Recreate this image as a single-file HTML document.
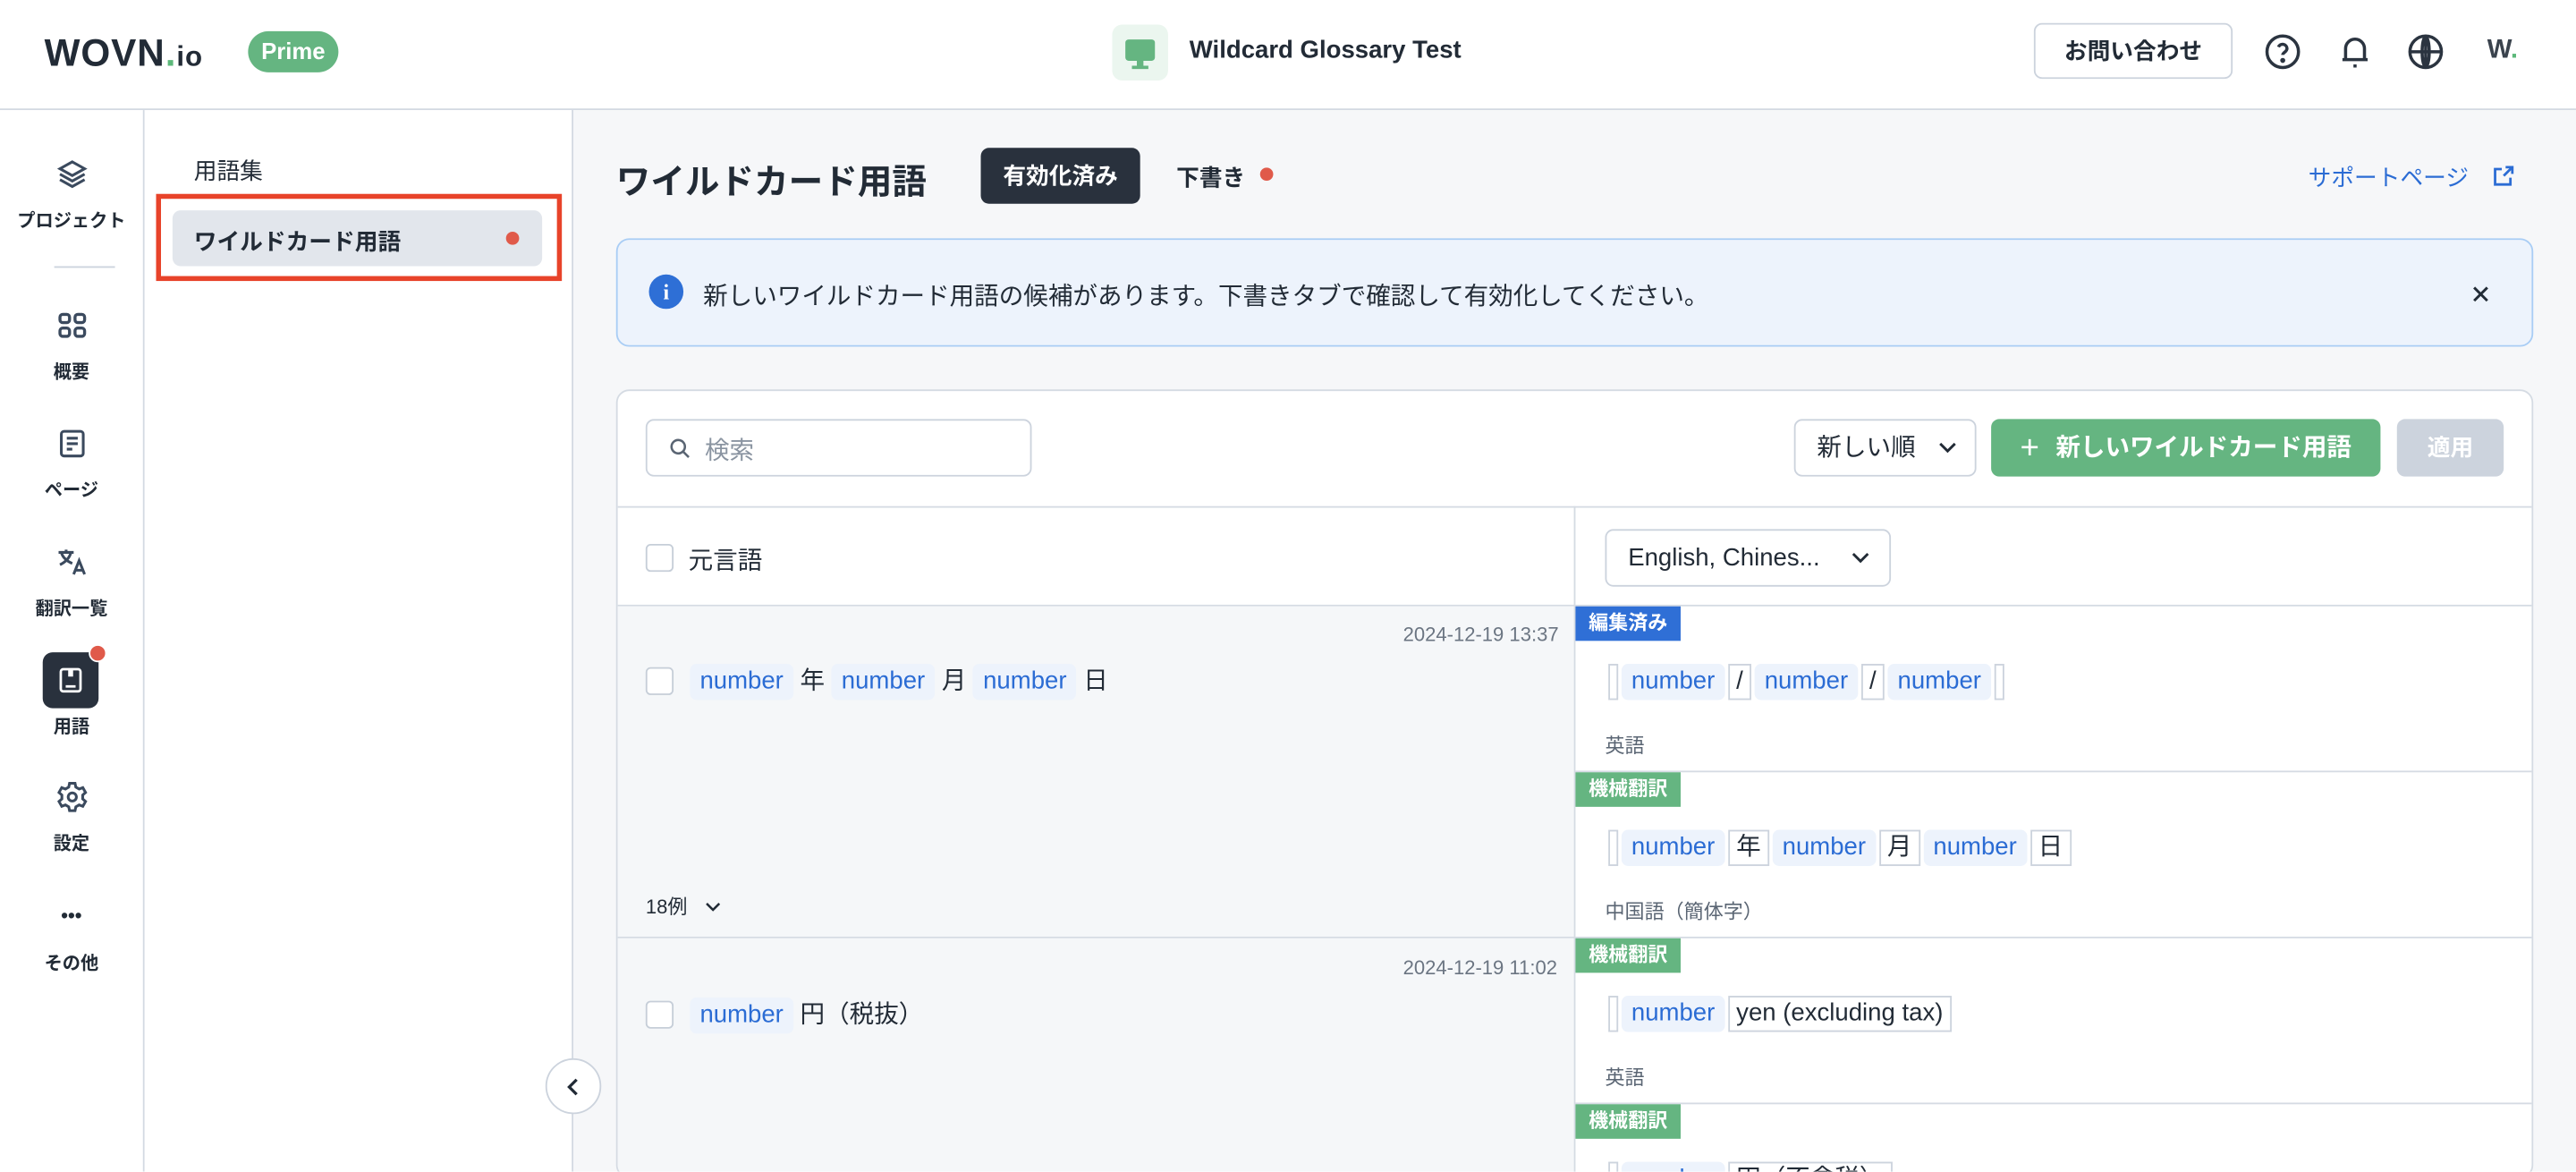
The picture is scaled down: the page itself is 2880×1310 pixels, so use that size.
<!DOCTYPE html>
<html><head><meta charset="utf-8">
<style>
*{box-sizing:border-box;margin:0;padding:0}
html,body{width:2880px;height:1309px;overflow:hidden;background:#fff}
body{font-family:"Liberation Sans","Noto Sans CJK JP",sans-serif;color:#222b36}
#w{position:absolute;left:0;top:0;width:1568px;height:713px;transform:scale(1.83673);transform-origin:0 0;overflow:hidden}
.a{position:absolute}
.hdr{left:0;top:0;width:1568px;height:67px;border-bottom:1px solid #d3d9e2;background:#fff}
.rail{left:0;top:67px;width:88px;height:646px;border-right:1px solid #d3d9e2;background:#fff}
.side{left:88px;top:67px;width:261px;height:646px;border-right:1px solid #d3d9e2;background:#fff}
.main{left:349px;top:67px;width:1219px;height:646px;background:#f6f7f9;overflow:visible}
.ri{position:absolute;left:0;width:87px;text-align:center;font-size:11px;font-weight:700;color:#222b36}
.ri svg{display:block;margin:0 auto 10px}
.tok{display:inline-block;background:#edf3fc;color:#2b6cd4;border-radius:4px;padding:0 6px;height:22px;line-height:22px;font-size:15px;vertical-align:middle}
.lit{display:inline-block;border:1px solid #ccd3dd;height:22px;line-height:20px;padding:0 4px;font-size:15px;vertical-align:middle;color:#222b36;margin:0 2px}
.emp{display:inline-block;border:1px solid #ccd3dd;width:6px;height:22px;vertical-align:middle}
.badge{position:absolute;left:0;height:21px;line-height:21px;padding:0 8px;color:#fff;font-size:12px;font-weight:700}
.cb{position:absolute;width:17px;height:17px;border:1px solid #c6ced8;border-radius:3px;background:#fff}
.lang{position:absolute;left:18px;font-size:12px;color:#5a6573}
.date{position:absolute;font-size:12px;color:#6b7582}
.chev{position:absolute}
</style></head><body><div id="w">
<div class="a hdr">
  <div class="a" style="left:27px;top:19px;font-size:23px;font-weight:900;letter-spacing:0.5px;color:#222b36">WOVN<span style="color:#5cb87a">.</span><span style="font-size:17px">io</span></div>
  <div class="a" style="left:151px;top:19px;width:55px;height:25px;border-radius:13px;background:#65b581;color:#fff;font-size:14px;font-weight:700;text-align:center;line-height:25px">Prime</div>
  <div class="a" style="left:677px;top:15px;width:34px;height:34px;border-radius:6px;background:#ebf6ef"><div class="a" style="left:8px;top:9px;width:18px;height:13px;background:#65b581;border-radius:2px"></div><div class="a" style="left:15px;top:22px;width:4px;height:4px;background:#65b581"></div><div class="a" style="left:12px;top:25px;width:10px;height:2px;background:#65b581"></div></div>
  <div class="a" style="left:724px;top:22px;font-size:15px;font-weight:600">Wildcard Glossary Test</div>
  <div class="a" style="left:1238px;top:14px;width:121px;height:34px;border:1px solid #ccd3dd;border-radius:5px;text-align:center;line-height:32px;font-size:14px;font-weight:700">お問い合わせ</div>
  <svg class="a" style="left:1378px;top:20px" width="23" height="23" viewBox="0 0 24 24" fill="none" stroke="#2b3440" stroke-width="2"><circle cx="12" cy="12" r="10"/><path d="M9.3 9a2.8 2.8 0 0 1 5.4 1c0 2-2.7 2.5-2.7 4"/><circle cx="12" cy="17.5" r=".6" fill="#2b3440"/></svg>
  <svg class="a" style="left:1422px;top:20px" width="23" height="23" viewBox="0 0 24 24" fill="none" stroke="#2b3440" stroke-width="2"><path d="M6 17V10a6 6 0 0 1 12 0v7M4 17h16M11 21h2"/></svg>
  <svg class="a" style="left:1465px;top:20px" width="23" height="23" viewBox="0 0 24 24" fill="none" stroke="#2b3440" stroke-width="2"><circle cx="12" cy="12" r="10"/><path d="M2 12h20M12 2v20M12 2c-3 3-3 17 0 20M12 2c3 3 3 17 0 20"/></svg>
  <div class="a" style="left:1514px;top:22px;font-size:16px;font-weight:900;color:#3a434d">W<span style="color:#5cb87a">.</span></div>
</div>
<div class="a rail">
  <div class="ri" style="top:29px"><svg width="20" height="20" viewBox="0 0 24 24" fill="none" stroke="#3b4a5e" stroke-width="2"><path d="M12 3l9 5-9 5-9-5z M3 12l9 5 9-5 M3 16l9 5 9-5"/></svg>プロジェクト</div>
  <div class="a" style="left:33px;top:95px;width:37px;height:1px;background:#ccd3dd"></div>
  <div class="ri" style="top:121px"><svg width="20" height="20" viewBox="0 0 24 24" fill="none" stroke="#3b4a5e" stroke-width="2.2"><rect x="3" y="4" width="7" height="6" rx="2"/><rect x="14" y="4" width="7" height="6" rx="2"/><rect x="3" y="14" width="7" height="6" rx="2"/><rect x="14" y="14" width="7" height="6" rx="2"/></svg>概要</div>
  <div class="ri" style="top:193px"><svg width="20" height="20" viewBox="0 0 24 24" fill="none" stroke="#3b4a5e" stroke-width="2"><rect x="4" y="3" width="16" height="18" rx="2"/><path d="M8 8h8M8 12h8M8 16h4"/></svg>ページ</div>
  <div class="ri" style="top:265px"><svg width="20" height="20" viewBox="0 0 24 24" fill="none" stroke="#3b4a5e" stroke-width="2"><path d="M2 5h11M7.5 3v2M4 5c1 4 5 7 8 8M11 5c-1 4-4 7-8 9M13 21l4-10 4 10M14.5 18h5"/></svg>翻訳一覧</div>
  <div class="a" style="left:26px;top:330px;width:34px;height:34px;border-radius:6px;background:#29313d"><svg class="a" style="left:8px;top:8px" width="18" height="18" viewBox="0 0 24 24" fill="none" stroke="#fff" stroke-width="2"><rect x="4" y="3" width="16" height="18" rx="2"/><path d="M11 3v5h2V3M8 17h8"/></svg></div>
  <div class="a" style="left:54px;top:325px;width:11px;height:11px;border-radius:50%;background:#e05a4a;border:1.5px solid #fff"></div>
  <div class="ri" style="top:367px">用語</div>
  <div class="ri" style="top:408px"><svg width="20" height="20" viewBox="0 0 24 24" fill="none" stroke="#3b4a5e" stroke-width="2"><circle cx="12" cy="12" r="3"/><path d="M10 2h4l.6 2.8 2.4 1.4 2.7-1 2 3.5-2.1 1.9v2.8l2.1 1.9-2 3.5-2.7-1-2.4 1.4L14 22h-4l-.6-2.8-2.4-1.4-2.7 1-2-3.5 2.1-1.9V10.6L2.3 8.7l2-3.5 2.7 1 2.4-1.4z"/></svg>設定</div>
  <div class="ri" style="top:484px;font-size:12px;line-height:12px;letter-spacing:0px">•••</div>
  <div class="ri" style="top:511px">その他</div>
</div>
<div class="a side">
  <div class="a" style="left:30px;top:27px;font-size:14px;color:#222b36">用語集</div>
  <div class="a" style="left:17px;top:61px;width:225px;height:34px;border-radius:5px;background:#e2e6ec"></div>
  <div class="a" style="left:30px;top:70px;font-size:14px;font-weight:700">ワイルドカード用語</div>
  <div class="a" style="left:220px;top:74px;width:8px;height:8px;border-radius:50%;background:#e05a4a"></div>
  <div class="a" style="left:7px;top:51px;width:247px;height:53px;border:3px solid #e8432a"></div>
</div>
<div class="a main">
  <div class="a" style="left:26px;top:28px;font-size:21px;font-weight:700">ワイルドカード用語</div>
  <div class="a" style="left:248px;top:23px;width:97px;height:34px;border-radius:5px;background:#29313d;color:#fff;font-size:14px;font-weight:700;text-align:center;line-height:34px">有効化済み</div>
  <div class="a" style="left:367px;top:31px;font-size:14px;font-weight:700">下書き</div>
  <div class="a" style="left:418px;top:35px;width:8px;height:8px;border-radius:50%;background:#e05a4a"></div>
  <div class="a" style="left:1056px;top:31px;font-size:14px;color:#2b6cd4">サポートページ</div>
  <svg class="a" style="left:1168px;top:33px" width="14" height="14" viewBox="0 0 24 24" fill="none" stroke="#2b6cd4" stroke-width="2.6"><path d="M14 3h7v7M21 3l-9 9M19 14v7H3V5h7"/></svg>
  <div class="a" style="left:26px;top:78px;width:1167px;height:66px;border:1px solid #a9cdf5;border-radius:8px;background:#edf3fc"></div>
  <div class="a" style="left:46px;top:100px;width:21px;height:21px;border-radius:50%;background:#2e6fd6;color:#fff;text-align:center;font-size:13px;font-weight:700;line-height:21px;font-family:'Liberation Serif',serif">i</div>
  <div class="a" style="left:79px;top:102px;font-size:15px">新しいワイルドカード用語の候補があります。下書きタブで確認して有効化してください。</div>
  <svg class="a" style="left:1156px;top:107px" width="10" height="10" viewBox="0 0 10 10" stroke="#222b36" stroke-width="1.6"><path d="M1 1l8 8M9 1l-8 8"/></svg>

  <div class="a" style="left:26px;top:170px;width:1167px;height:480px;border:1px solid #d5dbe3;border-radius:8px;background:#fff;overflow:hidden">
    <div class="a" style="left:17px;top:17px;width:235px;height:35px;border:1px solid #ccd3dd;border-radius:5px"></div>
    <svg class="a" style="left:31px;top:28px" width="14" height="14" viewBox="0 0 24 24" fill="none" stroke="#5a6573" stroke-width="2.4"><circle cx="10" cy="10" r="7"/><path d="M15 15l6 6"/></svg>
    <div class="a" style="left:53px;top:25px;font-size:15px;color:#8a94a1">検索</div>
    <div class="a" style="left:716px;top:17px;width:111px;height:35px;border:1px solid #ccd3dd;border-radius:5px;font-size:15px;line-height:33px;padding-left:13px">新しい順</div>
    <svg class="chev" style="left:804px;top:31px" width="11" height="7" viewBox="0 0 11 7" fill="none" stroke="#222b36" stroke-width="1.6"><path d="M1 1l4.5 4.5L10 1"/></svg>
    <div class="a" style="left:836px;top:17px;width:237px;height:35px;border-radius:5px;background:#65b581;color:#fff;font-size:15px;font-weight:700;line-height:35px;text-align:center"><span style="font-weight:400;font-size:20px;vertical-align:-2px;margin-right:10px">+</span>新しいワイルドカード用語</div>
    <div class="a" style="left:1083px;top:17px;width:65px;height:35px;border-radius:5px;background:#ccd3dd;color:#fff;font-size:14px;font-weight:700;line-height:35px;text-align:center">適用</div>
    <div class="a" style="left:0;top:70px;width:1167px;height:1px;background:#d5dbe3"></div>
    <div class="a" style="left:582px;top:70px;width:1px;height:460px;background:#d5dbe3"></div>
    <div class="cb" style="left:17px;top:93px"></div>
    <div class="a" style="left:43px;top:92px;font-size:15px">元言語</div>
    <div class="a" style="left:601px;top:84px;width:174px;height:35px;border:1px solid #ccd3dd;border-radius:5px;font-size:15px;line-height:33px;padding-left:13px">English, Chines...</div>
    <svg class="chev" style="left:751px;top:98px" width="11" height="7" viewBox="0 0 11 7" fill="none" stroke="#222b36" stroke-width="1.6"><path d="M1 1l4.5 4.5L10 1"/></svg>
    <div class="a" style="left:0;top:130px;width:1167px;height:1px;background:#d5dbe3"></div>
    <div class="a" style="left:0;top:131px;width:582px;height:201px;background:#f5f7f9"></div>
    <div class="date" style="left:478px;top:141px">2024-12-19 13:37</div>
    <div class="cb" style="left:17px;top:168px"></div>
    <div class="a" style="left:44px;top:165px;font-size:15px"><span class="tok">number</span> 年 <span class="tok">number</span> 月 <span class="tok">number</span> 日</div>
    <div class="a" style="left:17px;top:305px;font-size:12px">18例</div>
    <svg class="chev" style="left:53px;top:311px" width="10" height="6" viewBox="0 0 11 7" fill="none" stroke="#222b36" stroke-width="1.6"><path d="M1 1l4.5 4.5L10 1"/></svg>
    <div class="a" style="left:583px;top:131px;width:584px;height:400px">
      <div class="badge" style="top:0;background:#2f6fd6">編集済み</div>
      <div class="a" style="left:20px;top:35px"><span class="emp"></span><span class="tok" style="margin-left:2px">number</span><span class="lit">/</span><span class="tok">number</span><span class="lit">/</span><span class="tok">number</span><span class="emp" style="margin-left:2px"></span></div>
      <div class="lang" style="top:76px">英語</div>
      <div class="a" style="left:0;top:100px;width:584px;height:1px;background:#d5dbe3"></div>
      <div class="badge" style="top:101px;background:#65b581">機械翻訳</div>
      <div class="a" style="left:20px;top:136px"><span class="emp"></span><span class="tok" style="margin-left:2px">number</span><span class="lit">年</span><span class="tok">number</span><span class="lit">月</span><span class="tok">number</span><span class="lit">日</span></div>
      <div class="lang" style="top:177px">中国語（簡体字）</div>
      <div class="a" style="left:0;top:201px;width:584px;height:1px;background:#d5dbe3"></div>
      <div class="badge" style="top:202px;background:#65b581">機械翻訳</div>
      <div class="a" style="left:20px;top:237px"><span class="emp"></span><span class="tok" style="margin-left:2px">number</span><span class="lit">yen (excluding tax)</span></div>
      <div class="lang" style="top:278px">英語</div>
      <div class="a" style="left:0;top:302px;width:584px;height:1px;background:#d5dbe3"></div>
      <div class="badge" style="top:303px;background:#65b581">機械翻訳</div>
      <div class="a" style="left:20px;top:338px"><span class="emp"></span><span class="tok" style="margin-left:2px">number</span><span class="lit">円（不含税）</span></div>
    </div>
    <div class="a" style="left:0;top:332px;width:583px;height:1px;background:#d5dbe3"></div>
    <div class="a" style="left:0;top:333px;width:582px;height:200px;background:#f5f7f9"></div>
    <div class="date" style="left:478px;top:344px">2024-12-19 11:02</div>
    <div class="cb" style="left:17px;top:371px"></div>
    <div class="a" style="left:44px;top:368px;font-size:15px"><span class="tok">number</span> 円（税抜）</div>
  </div>
  <div class="a" style="left:-17px;top:577px;width:34px;height:34px;border-radius:50%;border:1px solid #ccd3dd;background:#fff"></div>
  <svg class="a" style="left:-4px;top:589px" width="8" height="11" viewBox="0 0 8 11" fill="none" stroke="#222b36" stroke-width="1.8"><path d="M6 1L1.5 5.5 6 10"/></svg>
</div>
</div></body></html>
